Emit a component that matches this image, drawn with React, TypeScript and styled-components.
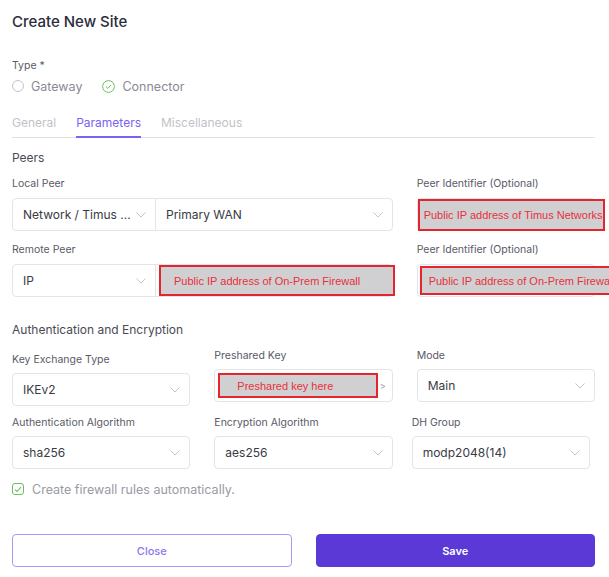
import React from 'react';
import styled, { createGlobalStyle } from 'styled-components';

const GlobalStyle = createGlobalStyle`
  body {
    margin: 0;
    background: #fff;
    font-family: Inter, 'Noto Sans', sans-serif;
    overflow: hidden;
  }
`;

const StyledPage = styled.div`
  width: 583px;
  padding: 12px 14px 0 12px;
`;

const StyledTitle = styled.h1`
  margin: 0;
  font-size: 15px;
  line-height: 20px;
  font-weight: 500;
  color: #2b2b3b;
`;

const StyledLabel = styled.div<{ $top?: number }>`
  margin-top: ${(props) => props.$top ?? 0}px;
  font-size: 10.5px;
  line-height: 14px;
  color: #5a5a66;
  white-space: nowrap;
`;

const StyledRadioRow = styled.div`
  display: flex;
  align-items: center;
  gap: 20px;
  margin-top: 4px;
  height: 18px;
`;

const StyledRadioOption = styled.div`
  display: flex;
  align-items: center;
  gap: 7px;
  font-size: 12.5px;
  color: #8a8a94;
`;

const StyledRadioCircle = styled.span`
  width: 12px;
  height: 12px;
  box-sizing: border-box;
  border: 1px solid #c4c4c4;
  border-radius: 50%;
`;

const StyledTabs = styled.div`
  display: flex;
  gap: 20px;
  margin-top: 19px;
  border-bottom: 1px solid #e2e2e6;
`;

const StyledTab = styled.div<{ $active?: boolean }>`
  padding-bottom: 4px;
  margin-bottom: -1px;
  font-size: 12px;
  line-height: 18px;
  color: ${(props) => (props.$active ? '#7b62f2' : '#c2c2c8')};
  border-bottom: 2px solid ${(props) => (props.$active ? '#7b62f2' : 'transparent')};
`;

const StyledSection = styled.div<{ $top: number }>`
  margin-top: ${(props) => props.$top}px;
  font-size: 12px;
  line-height: 16px;
  color: #4a4a55;
`;

const StyledGrid = styled.div<{ $top: number; $rowGap: number }>`
  display: grid;
  grid-template-columns: repeat(3, minmax(0, 1fr));
  column-gap: 24px;
  row-gap: ${(props) => props.$rowGap}px;
  margin-top: ${(props) => props.$top}px;
`;

const StyledField = styled.div<{ $span?: number; $gap: number; $shift?: number; $nudge?: number }>`
  display: flex;
  flex-direction: column;
  gap: ${(props) => props.$gap}px;
  grid-column: span ${(props) => props.$span ?? 1};
  margin-top: ${(props) => props.$shift ?? 0}px;
  margin-bottom: ${(props) => -(props.$shift ?? 0)}px;
  margin-left: ${(props) => -(props.$nudge ?? 0)}px;
  margin-right: ${(props) => props.$nudge ?? 0}px;
`;

const StyledBox = styled.div`
  display: flex;
  height: 33px;
  box-sizing: border-box;
  border: 1px solid #e4e4e8;
  border-radius: 4px;
  background: #fff;
`;

const StyledSelectPart = styled.div<{ $width?: number; $divider?: boolean }>`
  display: flex;
  align-items: center;
  justify-content: space-between;
  flex: ${(props) => (props.$width ? `0 0 ${props.$width}px` : '1')};
  padding: 0 9px 0 10px;
  box-sizing: border-box;
  font-size: 12px;
  color: #3a3a44;
  border-right: ${(props) => (props.$divider ? '1px solid #e4e4e8' : 'none')};
  white-space: nowrap;
`;

const StyledInputPart = styled.div`
  display: flex;
  align-items: center;
  flex: 1;
  min-width: 0;
`;

const StyledAnnotation = styled.div<{ $indent: number; $left: number; $right: number; $height: number }>`
  display: flex;
  align-items: center;
  height: ${(props) => props.$height}px;
  flex: 1;
  margin-left: ${(props) => props.$left}px;
  margin-right: ${(props) => props.$right}px;
  padding-left: ${(props) => props.$indent}px;
  box-sizing: border-box;
  background: #d0d0d2;
  border: 2px solid #e2262d;
  font-family: 'Liberation Sans', Arial, sans-serif;
  font-size: 11px;
  color: #e8303a;
  white-space: nowrap;
  overflow: visible;
`;

const StyledCaret = styled.span`
  margin: 0 6px 0 2px;
  font-size: 9px;
  color: #9a9aa2;
`;

const StyledCheckRow = styled.div`
  display: flex;
  align-items: center;
  gap: 8px;
  margin-top: 12px;
  height: 16px;
  font-size: 12.5px;
  color: #9a9aa4;
`;

const StyledCheckBox = styled.span`
  display: flex;
  align-items: center;
  justify-content: center;
  width: 12px;
  height: 12px;
  box-sizing: border-box;
  border: 1px solid #6cbf5f;
  border-radius: 3px;
`;

const StyledButtons = styled.div`
  display: grid;
  grid-template-columns: 1fr 1fr;
  gap: 24px;
  margin-top: 37px;
`;

const StyledButton = styled.button<{ $primary?: boolean }>`
  height: 33px;
  border-radius: 4px;
  font-family: inherit;
  font-size: 11px;
  font-weight: ${(props) => (props.$primary ? 600 : 500)};
  color: ${(props) => (props.$primary ? '#ffffff' : '#8b78f0')};
  background: ${(props) => (props.$primary ? '#5a39d6' : '#ffffff')};
  border: 1px solid ${(props) => (props.$primary ? '#5a39d6' : '#a999f5')};
`;

const Chevron = () => (
  <svg width='10' height='6' viewBox='0 0 10 6' fill='none'>
    <path d='M0.5 0.5 L5 5 L9.5 0.5' stroke='#c2c2c8' strokeWidth='1' />
  </svg>
);

const CheckCircle = () => (
  <svg width='13' height='13' viewBox='0 0 13 13' fill='none'>
    <circle cx='6.5' cy='6.5' r='5.9' stroke='#6cbf5f' strokeWidth='1' />
    <path d='M4 6.7 L5.8 8.4 L9 4.9' stroke='#6cbf5f' strokeWidth='1' />
  </svg>
);

const Select = ({ value }: { value: string }) => (
  <StyledBox>
    <StyledSelectPart>
      {value}
      <Chevron />
    </StyledSelectPart>
  </StyledBox>
);

const App = () => {
  return (
    <>
      <GlobalStyle />
      <StyledPage>
        <StyledTitle>Create New Site</StyledTitle>
        <StyledLabel $top={27}>Type *</StyledLabel>
        <StyledRadioRow>
          <StyledRadioOption>
            <StyledRadioCircle />
            Gateway
          </StyledRadioOption>
          <StyledRadioOption>
            <CheckCircle />
            Connector
          </StyledRadioOption>
        </StyledRadioRow>

        <StyledTabs>
          <StyledTab>General</StyledTab>
          <StyledTab $active>Parameters</StyledTab>
          <StyledTab>Miscellaneous</StyledTab>
        </StyledTabs>

        <StyledSection $top={12}>Peers</StyledSection>
        <StyledGrid $top={11} $rowGap={12}>
          <StyledField $span={2} $gap={7}>
            <StyledLabel>Local Peer</StyledLabel>
            <StyledBox>
              <StyledSelectPart $width={143} $divider>
                Network / Timus ...
                <Chevron />
              </StyledSelectPart>
              <StyledSelectPart>
                Primary WAN
                <Chevron />
              </StyledSelectPart>
            </StyledBox>
          </StyledField>
          <StyledField $gap={7}>
            <StyledLabel>Peer Identifier (Optional)</StyledLabel>
            <StyledBox>
              <StyledInputPart>
                <StyledAnnotation $indent={4} $left={0} $right={-1} $height={32}>
                  Public IP address of Timus Networks
                </StyledAnnotation>
              </StyledInputPart>
            </StyledBox>
          </StyledField>

          <StyledField $span={2} $gap={7}>
            <StyledLabel>Remote Peer</StyledLabel>
            <StyledBox>
              <StyledSelectPart $width={143} $divider>
                IP
                <Chevron />
              </StyledSelectPart>
              <StyledInputPart>
                <StyledAnnotation $indent={13} $left={3} $right={-3} $height={31}>
                  Public IP address of On-Prem Firewall
                </StyledAnnotation>
              </StyledInputPart>
            </StyledBox>
          </StyledField>
          <StyledField $gap={7}>
            <StyledLabel>Peer Identifier (Optional)</StyledLabel>
            <StyledBox>
              <StyledInputPart>
                <StyledAnnotation $indent={7} $left={2} $right={2} $height={29}>
                  Public IP address of On-Prem Firewall
                </StyledAnnotation>
              </StyledInputPart>
            </StyledBox>
          </StyledField>
        </StyledGrid>

        <StyledSection $top={25}>Authentication and Encryption</StyledSection>
        <StyledGrid $top={11} $rowGap={14}>
          <StyledField $gap={6} $shift={4}>
            <StyledLabel>Key Exchange Type</StyledLabel>
            <Select value='IKEv2' />
          </StyledField>
          <StyledField $gap={6}>
            <StyledLabel>Preshared Key</StyledLabel>
            <StyledBox>
              <StyledInputPart>
                <StyledAnnotation $indent={17} $left={3} $right={0} $height={25}>
                  Preshared key here
                </StyledAnnotation>
                <StyledCaret>&gt;</StyledCaret>
              </StyledInputPart>
            </StyledBox>
          </StyledField>
          <StyledField $gap={6}>
            <StyledLabel>Mode</StyledLabel>
            <Select value='Main' />
          </StyledField>

          <StyledField $gap={6}>
            <StyledLabel>Authentication Algorithm</StyledLabel>
            <Select value='sha256' />
          </StyledField>
          <StyledField $gap={6}>
            <StyledLabel>Encryption Algorithm</StyledLabel>
            <Select value='aes256' />
          </StyledField>
          <StyledField $gap={6} $nudge={5}>
            <StyledLabel>DH Group</StyledLabel>
            <Select value='modp2048(14)' />
          </StyledField>
        </StyledGrid>

        <StyledCheckRow>
          <StyledCheckBox>
            <svg width='8' height='7' viewBox='0 0 8 7' fill='none'>
              <path d='M1 3.6 L3 5.5 L7 1.2' stroke='#6cbf5f' strokeWidth='1.1' />
            </svg>
          </StyledCheckBox>
          Create firewall rules automatically.
        </StyledCheckRow>

        <StyledButtons>
          <StyledButton>Close</StyledButton>
          <StyledButton $primary>Save</StyledButton>
        </StyledButtons>
      </StyledPage>
    </>
  );
};

export default App;
